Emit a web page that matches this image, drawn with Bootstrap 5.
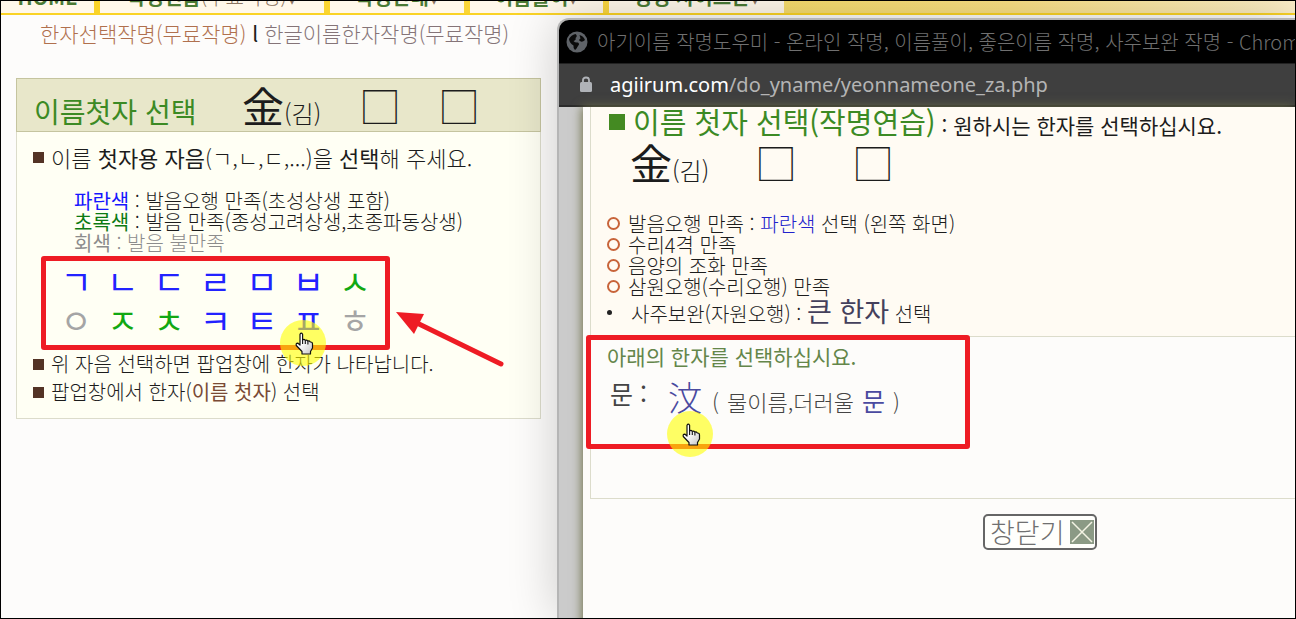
<!DOCTYPE html>
<html lang="ko">
<head>
<meta charset="utf-8">
<meta name="viewport" content="width=device-width, initial-scale=1">
<title>아기이름 작명도우미</title>
<link href="https://cdn.jsdelivr.net/npm/bootstrap@5.3.0/dist/css/bootstrap.min.css" rel="stylesheet">
<style>
body{font-family:"Noto Sans CJK KR",sans-serif;font-weight:300;font-size:20px;line-height:21px;color:#1c1c1c;background:#fdfcfb}
a{text-decoration:none}
p,ul{margin:0}
b,.reg{font-weight:400}
.desk{height:100vh;border:1px solid #000;white-space:nowrap}
.green{color:#3c8a24}

/* top menu, scrolled mostly out of view */
.topmenu{height:14px;gap:6px;background:linear-gradient(90deg,#fad325 0,#fad63c 45%,#f6dc6c 60%,#fae084 78%,#fcefc8 100%);border-bottom:2px solid #fad325}
.topmenu a{display:flex;align-items:flex-end;justify-content:center;height:12px;padding-bottom:6px;overflow:hidden;background:#fff8ea;color:#4a7a34;font-weight:700;font-size:20px;line-height:20px}
.topmenu span{font-weight:300;color:#8a7460}
.m1{width:93px}.m2{width:224px}.m3{width:134px}.m4{width:133px}.m5{width:175px}
.sub{padding:7px 0 1px 39px;font-size:21px;line-height:22px}
.sub .on{color:#b0704e}.sub .off{color:#857478}

/* left panel */
.picker{width:525px;margin:33px 0 0 15px;border:1px solid #dcdccb;background:#fffff4}
.picker header{height:54px;margin:-1px;padding-left:17px;background:#e8e7ca;border:1px solid #c5c49f}
.big{font-size:28px;line-height:29px;font-weight:400}
.hanja{font-size:42px;line-height:52px;font-weight:400}
.hanja small{font-size:24px;font-weight:300}
.slot{font-size:42px;line-height:52px;font-weight:300}
.lead-line{font-size:22px;line-height:32px;margin-top:10px}
.hints{margin:17px 0 0 57px}
.sq{width:11px;height:11px;background:#533325}
.row-line{padding-left:16px;gap:7px}
.tall{line-height:28px}
.tall:last-child{padding-bottom:12px}
.blue{color:#1616ff}.grn{color:#0c7a12}.dim{color:#8c8c8c}
.jamo{width:349px;height:94px;margin:3px 0 0 24px;padding:0 7px;grid-template-columns:repeat(7,1fr);align-content:start;border:5px solid #ee1c24;border-radius:3px}
.jamo button{border:0;background:none;padding:0;font-size:34px;font-weight:400;line-height:39px;height:39px;color:#2222ff}
.jamo .g{color:#12a812}.jamo .x{color:#a5a5a5}

/* popup window */
.popup{left:556px;right:0;top:17px;bottom:0;border:2px solid #b5b5b5;border-width:2px 0 0 2px;border-radius:12px 0 0 0;background:#cbcbcb;box-shadow:0 0 50px rgba(0,0,0,.2)}
.titlebar{height:44px;padding-left:7px;gap:9px;background:#000;color:#707070;border-bottom:1px solid #222;border-radius:10px 0 0 0;overflow:hidden}
.urlbar{height:43px;padding-left:20px;background:#3f3f3f;border-bottom:2px solid #2b2b2b;color:#b4b4b4;font:400 20px/40px "Noto Sans",sans-serif;gap:17px}
.urlbar b{color:#fff}
.view{margin-left:24px;background:#fdfcfa;box-shadow:-1px 0 10px 0 #6e7048}
.sheet{width:900px;margin-left:7px;border:1px solid #dcdccb;border-top:0}
.upper{height:229px;background:#fffbf3}
.lower{height:162px;border-top:1px solid #dcdccb}
.gsq{width:16px;height:16px;background:#448a22}
.ring{width:13px;height:13px;border:2px solid #c8643a;border-radius:50%}
.dot{width:5px;height:5px;border-radius:50%;background:#222}
.frame{left:-5px;top:-2px;width:384px;height:114px;border:5px solid #ee1c24;border-radius:3px}
.navy{color:#4a4aa0}
.closer{width:114px;height:36px;padding:0 1px 0 5px;background:#fffffc;border:2px solid #666;border-radius:5px;color:#707070;font-size:27px;font-weight:300;line-height:32px}
.spot{width:46px;height:46px;border-radius:50%;background:rgba(255,255,0,.6)}
.spot svg{position:absolute;left:15px;top:12px}
.s1{left:279px;top:319px}.s2{left:76px;top:74px}
.arrow{left:393px;top:308px}
</style>
</head>
<body>
<svg width="0" height="0" class="position-absolute">
<defs>
<linearGradient id="hg" x1="0" y1="0" x2="1" y2="1"><stop offset=".4" stop-color="#fff"/><stop offset="1" stop-color="#c4c4c4"/></linearGradient>
<symbol id="hand" viewBox="0 0 19 23"><path d="M5 2.2Q6.300 0 7.600 2.200V8Q9 6.800 10.300 8.300Q11.800 7.500 12.900 9.100Q14.300 8.500 15.300 10Q17.400 9.800 17.500 12V16L15.500 19.500V22H7V19.500L1.300 13.500Q.6 11 3 11.200L5 13Z" fill="url(#hg)" stroke="#111" stroke-width="1.200" stroke-linejoin="round"/><path d="M7.600 7.500V12M10.300 8.500V12M12.900 9.300V12.500" stroke="#111" stroke-width="1.100"/></symbol>
</defs>
</svg>
<div class="desk position-relative overflow-hidden">
<nav class="topmenu d-flex"><a class="m1" href="#">HOME</a><a class="m2" href="#">작명연습<span>(무료작명)▾</span></a><a class="m3" href="#">작명안내<span>▾</span></a><a class="m4" href="#">이름풀이<span>▾</span></a><a class="m5" href="#">성명 사이트안<span>▾</span></a></nav>
<div class="sub"><a class="on" href="#">한자선택작명(무료작명)</a> <span class="reg">l</span> <a class="off" href="#">한글이름한자작명(무료작명)</a></div>

<section class="picker">
<header class="d-flex align-items-baseline">
<span class="big green" style="width:208px">이름첫자 선택</span>
<span class="hanja" style="width:117px">金<small>(김)</small></span>
<span class="slot" style="width:79px">□</span><span class="slot">□</span>
</header>
<p class="lead-line row-line d-flex align-items-center"><i class="sq"></i><span>이름 <b>첫자용 자음</b>(ㄱ,ㄴ,ㄷ,...)을 <b>선택</b>해 주세요.</span></p>
<div class="hints">
<p><b class="blue">파란색</b> : 발음오행 만족(초성상생 포함)</p>
<p><b class="grn">초록색</b> : 발음 만족(종성고려상생,초종파동상생)</p>
<p class="dim"><b>회색</b> : 발음 불만족</p>
</div>
<div class="jamo d-grid">
<button>ㄱ</button><button>ㄴ</button><button>ㄷ</button><button>ㄹ</button><button>ㅁ</button><button>ㅂ</button><button class="g">ㅅ</button>
<button class="x">ㅇ</button><button class="g">ㅈ</button><button class="g">ㅊ</button><button>ㅋ</button><button>ㅌ</button><button>ㅍ</button><button class="x">ㅎ</button>
</div>
<p class="tall row-line d-flex align-items-center"><i class="sq"></i><span>위 자음 선택하면 팝업창에 한자가 나타납니다.</span></p>
<p class="tall row-line d-flex align-items-center"><i class="sq"></i><span>팝업창에서 한자(<b style="color:#7a4a34">이름 첫자</b>) 선택</span></p>
</section>

<section class="popup position-absolute">
<div class="titlebar d-flex align-items-center">
<svg class="flex-shrink-0" width="22" height="22" viewBox="0 0 22 22"><circle cx="11" cy="11" r="10.500" fill="#5f6368"/><path d="M3 8Q5 4 9.500 3Q12 5 9.500 7Q10.500 9 7.500 10Q9 12 12 11.500Q14 13 12 15Q10.500 18 9 19Q7 17 7.500 14.500Q3.500 12 3 8ZM13.500 4Q17.500 5 19 9Q16 12 14 10Q12 9 14.500 7.500Z" fill="#0a0a0a"/></svg>
<span>아기이름 작명도우미 - 온라인 작명, 이름풀이, 좋은이름 작명, 사주보완 작명 - Chrome</span>
</div>
<div class="urlbar d-flex align-items-center">
<svg width="14" height="17" viewBox="0 0 14 17"><rect x="1" y="6" width="12" height="10" rx="1.500" fill="#b0b3b8"/><path d="M4 7V4Q4 1.500 7 1.500T10 4V7" fill="none" stroke="#b0b3b8" stroke-width="1.800"/></svg>
<span><b>agiirum.com</b>/do_yname/yeonnameone_za.php</span>
</div>
<div class="view vh-100">
<div class="sheet">
<div class="upper">
<div class="d-flex align-items-center" style="padding-left:18px;gap:8px"><i class="gsq"></i><span><span class="big green" style="font-size:29px">이름 첫자 선택(작명연습)</span><span class="reg" style="font-size:21px"> : 원하시는 한자를 선택하십시요.</span></span></div>
<div class="d-flex align-items-baseline" style="padding-left:39px"><span class="hanja" style="width:125px">金<small>(김)</small></span><span class="slot" style="width:97px">□</span><span class="slot">□</span></div>
<ul class="list-unstyled" style="padding:17px 0 0 16px">
<li class="d-flex align-items-center gap-2"><i class="ring"></i><span>발음오행 만족 : <a href="#" style="color:#2222cc">파란색</a> 선택 (왼쪽 화면)</span></li>
<li class="d-flex align-items-center gap-2"><i class="ring"></i>수리4격 만족</li>
<li class="d-flex align-items-center gap-2"><i class="ring"></i>음양의 조화 만족</li>
<li class="d-flex align-items-center gap-2"><i class="ring"></i>삼원오행(수리오행) 만족</li>
<li class="d-flex align-items-center" style="gap:19px"><i class="dot"></i><span style="line-height:27px">사주보완(자원오행) : <b style="font-size:27px;color:#44405c">큰 한자</b> 선택</span></li>
</ul>
</div>
<div class="lower position-relative">
<p class="reg" style="padding:8px 0 0 16px;font-size:21px;line-height:22px;color:#64864a">아래의 한자를 선택하십시요.</p>
<div class="d-flex align-items-baseline" style="padding:8px 0 0 19px;color:#444">
<span class="reg align-self-start" style="width:58px;font-size:25px;line-height:37px">문 :</span><a class="navy" href="#" style="width:44px;font-size:34px;line-height:44px">汶</a><span class="d-flex align-items-baseline" style="font-size:22px;gap:8px"><span>(</span><span>물이름,더러울</span><a class="navy reg" href="#" style="font-size:25px">문</a><span>)</span></span>
</div>
<div class="frame position-absolute"></div>
<div class="spot s2 position-absolute"><svg width="19" height="23"><use href="#hand"/></svg></div>
</div>
</div>
<div class="d-flex justify-content-center" style="width:914px;padding-top:15px"><button class="closer d-flex align-items-center justify-content-between">창닫기<svg width="24" height="24" viewBox="0 0 24 24"><rect width="24" height="24" fill="#8b9a85"/><path d="M2 2L22 22M22 2L2 22" stroke="#f4f4e4" stroke-width="1.500"/></svg></button></div>
</div>
</section>

<svg class="arrow position-absolute" width="114" height="64" viewBox="0 0 114 64"><path d="M25 15L107 55" stroke="#ee1c24" stroke-width="5" stroke-linecap="round"/><path d="M2 3L30 5L20 25Z" fill="#ee1c24"/></svg>
<div class="spot s1 position-absolute"><svg width="19" height="23"><use href="#hand"/></svg></div>
</div>
<script src="https://cdn.jsdelivr.net/npm/bootstrap@5.3.0/dist/js/bootstrap.bundle.min.js"></script>
</body>
</html>
